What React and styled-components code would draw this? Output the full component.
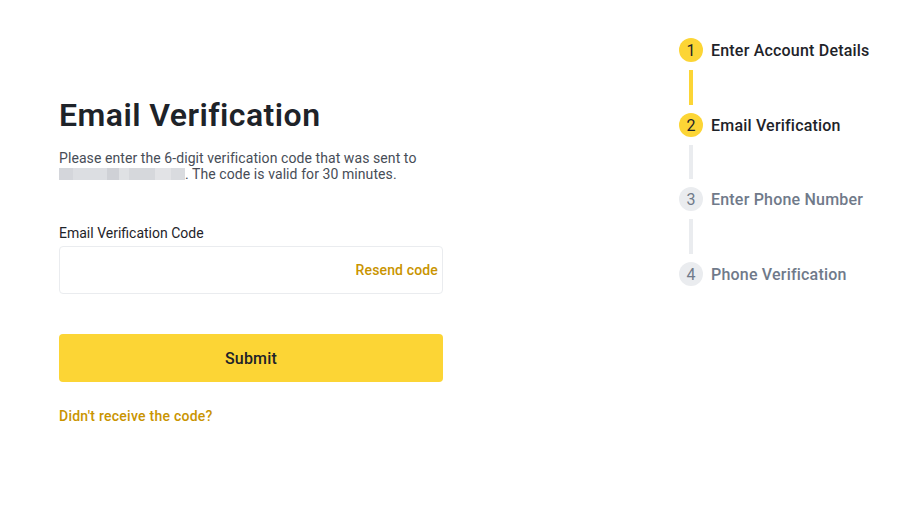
import React from "react";
import styled, { createGlobalStyle } from "styled-components";

const Global = createGlobalStyle`
  html, body { margin: 0; padding: 0; background: #fff; }
  body { font-family: "Roboto", "Noto Sans", sans-serif; color: #1e2329; }
  * { box-sizing: border-box; }
`;

const Page = styled.div`
  display: flex;
  width: 909px;
  height: 522px;
  padding: 0 0 0 59px;
`;

const Main = styled.div`
  width: 384px;
  padding-top: 95px;
  display: flex;
  flex-direction: column;
`;

const Title = styled.h1`
  margin: 0;
  font-size: 32px;
  line-height: 40px;
  font-weight: 600;
  letter-spacing: 0.45px;
  color: #1e2329;
`;

const Desc = styled.p`
  margin: 15px 0 0;
  font-size: 14px;
  line-height: 16px;
  letter-spacing: 0.08px;
  color: #474d57;
  width: 375px;
`;

const Masked = styled.span`
  display: inline-block;
  width: 126px;
  height: 12px;
  vertical-align: -1px;
  background: linear-gradient(
    90deg,
    #d4d6db 0 14px,
    #dcdee2 14px 48px,
    #cfd1d6 48px 60px,
    #dfe1e4 60px 70px,
    #d6d8dc 70px 96px,
    #e2e3e6 96px 112px,
    #d9dbdf 112px 126px
  );
`;

const Label = styled.div`
  margin-top: 41px;
  font-size: 14px;
  line-height: 20px;
  color: #1e2329;
`;

const InputBox = styled.div`
  margin-top: 3px;
  height: 48px;
  border: 1px solid #eaecef;
  border-radius: 4px;
  display: flex;
  align-items: center;
  justify-content: flex-end;
  padding: 0 4px 0 12px;
`;

const Resend = styled.span`
  font-size: 14px;
  font-weight: 500;
  letter-spacing: 0.15px;
  color: #c99400;
`;

const SubmitButton = styled.button`
  margin-top: 40px;
  height: 48px;
  width: 100%;
  border: none;
  border-radius: 4px;
  background: #fcd535;
  font-family: inherit;
  font-size: 16px;
  font-weight: 500;
  letter-spacing: 0.2px;
  color: #1e2329;
`;

const Help = styled.a`
  margin-top: 24px;
  font-size: 14px;
  font-weight: 500;
  line-height: 20px;
  letter-spacing: 0.25px;
  color: #c99400;
`;

const Steps = styled.div`
  margin-left: 236px;
  padding-top: 38px;
  display: flex;
  flex-direction: column;
`;

const Step = styled.div`
  display: flex;
  align-items: center;
  gap: 8px;
  height: 24px;
`;

const Circle = styled.div`
  width: 24px;
  height: 24px;
  border-radius: 50%;
  background: ${(p) => (p.$active ? "#fcd535" : "#eaecef")};
  color: ${(p) => (p.$active ? "#1e2329" : "#707a8a")};
  display: flex;
  align-items: center;
  justify-content: center;
  font-size: 16px;
`;

const StepText = styled.span`
  font-size: 16px;
  font-weight: 500;
  letter-spacing: 0.2px;
  color: ${(p) => (p.$active ? "#1e2329" : "#707a8a")};
`;

const Connector = styled.div`
  width: 4px;
  height: ${(p) => (p.$short ? 34 : 35)}px;
  margin: 8px 0 8px 10px;
  background: ${(p) => (p.$active ? "#fcd535" : "#eaecef")};
`;

const steps = [
  { n: 1, label: "Enter Account Details", active: true },
  { n: 2, label: "Email Verification", active: true },
  { n: 3, label: "Enter Phone Number", active: false },
  { n: 4, label: "Phone Verification", active: false },
];

export default function App() {
  return (
    <>
      <Global />
      <Page>
        <Main>
          <Title>Email Verification</Title>
          <Desc>
            Please enter the 6-digit verification code that was sent to <Masked />. The code is valid for 30 minutes.
          </Desc>
          <Label>Email Verification Code</Label>
          <InputBox>
            <Resend>Resend code</Resend>
          </InputBox>
          <SubmitButton>Submit</SubmitButton>
          <Help>Didn't receive the code?</Help>
        </Main>
        <Steps>
          {steps.map((s, i) => (
            <React.Fragment key={s.n}>
              {i > 0 && <Connector $active={i === 1} $short={i === 2} />}
              <Step>
                <Circle $active={s.active}>{s.n}</Circle>
                <StepText $active={s.active}>{s.label}</StepText>
              </Step>
            </React.Fragment>
          ))}
        </Steps>
      </Page>
    </>
  );
}
